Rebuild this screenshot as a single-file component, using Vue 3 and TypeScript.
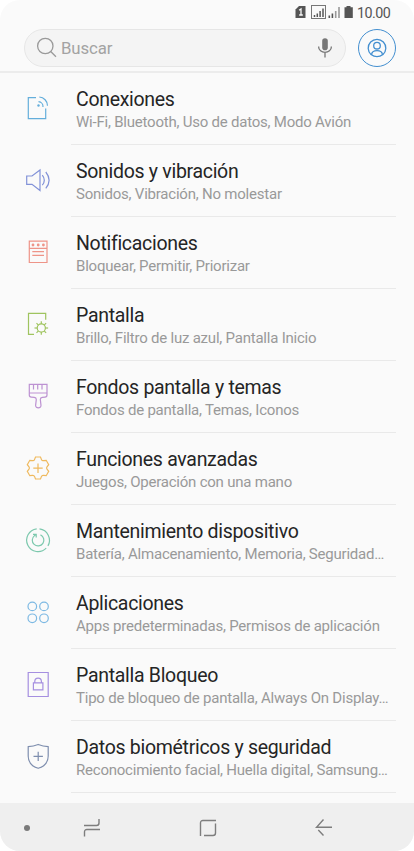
<script setup lang="ts">
interface Setting {
  icon: string
  title: string
  detail: string
}

const settings: Setting[] = [
  { icon: 'connections', title: 'Conexiones', detail: 'Wi-Fi, Bluetooth, Uso de datos, Modo Avión' },
  { icon: 'sound', title: 'Sonidos y vibración', detail: 'Sonidos, Vibración, No molestar' },
  { icon: 'notifications', title: 'Notificaciones', detail: 'Bloquear, Permitir, Priorizar' },
  { icon: 'display', title: 'Pantalla', detail: 'Brillo, Filtro de luz azul, Pantalla Inicio' },
  { icon: 'themes', title: 'Fondos pantalla y temas', detail: 'Fondos de pantalla, Temas, Iconos' },
  { icon: 'advanced', title: 'Funciones avanzadas', detail: 'Juegos, Operación con una mano' },
  { icon: 'maintenance', title: 'Mantenimiento dispositivo', detail: 'Batería, Almacenamiento, Memoria, Seguridad…' },
  { icon: 'apps', title: 'Aplicaciones', detail: 'Apps predeterminadas, Permisos de aplicación' },
  { icon: 'lock', title: 'Pantalla Bloqueo', detail: 'Tipo de bloqueo de pantalla, Always On Display…' },
  { icon: 'security', title: 'Datos biométricos y seguridad', detail: 'Reconocimiento facial, Huella digital, Samsung…' },
]
</script>

<template>
  <div class="screen">
    <header class="top">
      <div class="status">
        <svg class="status-icons" width="60" height="16" viewBox="0 0 60 16">
          <path d="M4 2h6.500v12H.5V5.500z" fill="#555" />
          <path d="M4.100 6.300 6 5v6M4.200 11h3.600" fill="none" stroke="#fafafa" stroke-width="1.300" />
          <rect x="16.500" y="1.500" width="14" height="13" fill="none" stroke="#777" />
          <path d="M19.500 13v-2M22.300 13V9.500M25.100 13V7M28 13V4.500" stroke="#555" stroke-width="1.500" />
          <path d="M34.300 14v-2.500M37.400 14v-4.500" stroke="#555" stroke-width="1.600" />
          <path d="M40.700 14V7M44 14V3" stroke="#999" stroke-width="1.600" />
          <path d="M51.500 2h4v1.300h2.300V14h-8.300V3.300h2z" fill="#555" />
        </svg>
        <span class="clock">10.00</span>
      </div>
      <div class="search-row">
        <div class="search">
          <svg width="22" height="22" viewBox="0 0 22 22" fill="none" stroke="#9a9a9a" stroke-width="1.300">
            <circle cx="9.300" cy="9" r="7.700" />
            <path d="m14.700 14.500 5.300 5.200" />
          </svg>
          <span class="placeholder">Buscar</span>
          <svg width="16" height="22" viewBox="0 0 16 22" fill="none" stroke="#777" stroke-width="1.300">
            <rect x="5.200" y="1.200" width="5.600" height="12" rx="2.800" fill="#777" stroke="none" />
            <path d="M1.700 9.500v.8a6.300 5 0 0 0 12.600 0v-.8M8 15.300v5.200" />
          </svg>
        </div>
        <div class="account">
          <svg width="20" height="20" viewBox="0 0 20 20" fill="none" stroke="#438fd0" stroke-width="1.300">
            <path d="M4.200 16.700A8.800 8.800 0 1 1 15.800 16.700" />
            <circle cx="10" cy="7.700" r="3.300" />
            <path d="M4.500 16.700c.3-2.600 2.500-4 5.500-4s5.200 1.400 5.500 4c-3 2.500-8 2.500-11 0z" />
          </svg>
        </div>
      </div>
    </header>

    <main class="list">
      <div v-for="item in settings" :key="item.icon" class="row">
        <svg class="icon" :class="item.icon" width="30" height="30" viewBox="0 0 30 30">
          <template v-if="item.icon === 'connections'">
            <path d="M13 4.700H5.300v21h17.400V15.500M15.500 8.700A5 5 0 0 1 20 14M16.300 4A8.700 8.700 0 0 1 24.500 12.700" />
            <circle cx="15.500" cy="12.500" r="1.200" class="solid" />
          </template>
          <path
            v-else-if="item.icon === 'sound'"
            d="M3.700 11H9l8-6v20.500l-8-6.200H3.700zM19.300 10.200q4 5 0 10M22.800 7q6.600 8.200 0 16.300"
          />
          <template v-else-if="item.icon === 'notifications'">
            <path d="M6.300 4.200H24v21.300H6.300zM6.300 11.400H24M9.300 14.700H21M9.300 18.300H21" />
            <circle v-for="x in [10, 15.2, 20.4]" :key="x" :cx="x" cy="8" r="1.400" class="solid" />
          </template>
          <template v-else-if="item.icon === 'display'">
            <path d="M11 25.300H5.500v-21h17.200v6.400" />
            <circle cx="18.300" cy="19" r="4.100" />
            <path
              v-for="a in [0, 45, 90, 135, 180, 225, 270, 315]"
              :key="a"
              d="M18.300 14.900v-2.700"
              :transform="`rotate(${a} 18.300 19)`"
            />
          </template>
          <path
            v-else-if="item.icon === 'themes'"
            d="M6.300 3.400H24V14q0 2-2 2.100l-2.700.3q-2 .3-2 2l.7 6c.2 3.300-5.600 3.300-5.400 0l.7-6q0-1.700-2-2L8.300 16.100Q6.300 16 6.300 14zM6.300 12H24M10.500 3.400v5M14.700 3.400v5M19 3.400v5"
          />
          <path
            v-else-if="item.icon === 'advanced'"
            d="M12.500 4h5l1 2.600q.5 1.300 1.900 1.100l2.800-.4 2.500 4.300-1.700 2.200q-.9 1.200 0 2.400l1.700 2.200-2.500 4.300-2.800-.4q-1.400-.2-1.900 1.100l-1 2.600h-5l-1-2.600q-.5-1.300-1.900-1.100l-2.800.4-2.500-4.300L6 16.200q.9-1.200 0-2.400l-1.700-2.200 2.500-4.300 2.800.4q1.400.2 1.900-1.100zM15 10.500v9.500M10.300 15.200h9.400"
          />
          <path
            v-else-if="item.icon === 'maintenance'"
            d="M16.500 3.900A11.400 11.400 0 0 1 24.900 20.900M23.200 23.200A11.400 11.400 0 1 1 13.700 3.900M17.500 9.900A5.800 5.800 0 1 1 11.500 10.600L13 9.600M10 9.300h3.200V12.600"
          />
          <g v-else-if="item.icon === 'apps'">
            <circle cx="9.300" cy="9.400" r="4.300" />
            <circle cx="21" cy="9.400" r="4.300" />
            <circle cx="9.300" cy="21.300" r="4.300" />
            <circle cx="21" cy="21.300" r="4.300" />
          </g>
          <path
            v-else-if="item.icon === 'lock'"
            d="M5.200 3.500h20v24h-20zM10.400 13.800h9.500v7h-9.500zM11.800 13.800v-1.400a3.300 3.300 0 0 1 6.600 0v1.400"
          />
          <path
            v-else
            d="M15.200 3.500Q20 5.300 25.200 5.700V15q0 9.300-10 12.300Q5.200 24.300 5.200 15V5.700Q10.400 5.300 15.200 3.500zM15.200 10.700v9.400M10.500 15.400h9.400"
          />
        </svg>
        <div class="text">
          <div class="title">{{ item.title }}</div>
          <div class="detail">{{ item.detail }}</div>
        </div>
      </div>
    </main>

    <nav class="nav">
      <span class="dot"></span>
      <svg width="18" height="20" viewBox="0 0 18 20">
        <path d="M1 7.500h12.500q2.500 0 2.500-2.500V1M17 11.500H4Q1.500 11.500 1.500 14v4.500" />
      </svg>
      <svg width="18" height="18" viewBox="0 0 18 18">
        <path d="M1.500 17V4q0-2.500 2.500-2.500h13M16.500 4.500V14q0 2.500-2.500 2.500H5" />
      </svg>
      <svg width="18" height="20" viewBox="0 0 18 20">
        <path d="M8.500 1.500 1.500 9.300H17M3.300 12 8.500 17.500" />
      </svg>
    </nav>
  </div>
</template>

<style>
body {
  background: #fff;
}
</style>

<style scoped>
.screen {
  width: 414px;
  height: 851px;
  box-sizing: border-box;
  display: flex;
  flex-direction: column;
  overflow: hidden;
  border-radius: 20px;
  background: #fafafa;
  font-family: Roboto, sans-serif;
}
svg {
  display: block;
  flex: none;
}
.top {
  box-sizing: border-box;
  height: 73px;
  flex: none;
  border-bottom: 2px solid #ececec;
}
.status {
  height: 24px;
  padding: 1px 24px 0 0;
  box-sizing: border-box;
  display: flex;
  align-items: center;
  justify-content: flex-end;
  gap: 2px;
}
.status-icons {
  margin-top: -1px;
}
.clock {
  width: 33px;
  font-size: 14.3px;
  letter-spacing: -0.5px;
  line-height: 20px;
  color: #555;
}
.search-row {
  display: flex;
  align-items: center;
  gap: 12px;
  padding: 5px 0 0 24px;
}
.search {
  box-sizing: border-box;
  width: 322px;
  height: 38px;
  display: flex;
  align-items: center;
  padding: 0 12px 0 11px;
  border: 1px solid #e6e6e6;
  border-radius: 19px;
  background: #f4f4f4;
}
.placeholder {
  flex: 1;
  margin-left: 3px;
  font-size: 16.8px;
  letter-spacing: -0.1px;
  color: #a3a3a3;
}
.account {
  box-sizing: border-box;
  width: 38px;
  height: 38px;
  display: flex;
  align-items: center;
  justify-content: center;
  border: 1px solid #438fd0;
  border-radius: 50%;
}
.list {
  height: 730px;
  flex: none;
  overflow: hidden;
}
.row {
  height: 72px;
  display: flex;
}
.icon {
  margin: 20px 18px 0 23px;
  fill: none;
  stroke: currentColor;
  stroke-width: 1.2;
}
.solid {
  fill: currentColor;
  stroke: none;
}
.text {
  box-sizing: border-box;
  width: 325px;
  padding: 14px 0 0 5px;
  border-bottom: 1px solid #e9e9e9;
  white-space: nowrap;
}
.title {
  font-size: 19.5px;
  letter-spacing: -0.3px;
  line-height: 26px;
  color: #252525;
}
.detail {
  margin-top: -1px;
  font-size: 15px;
  letter-spacing: -0.22px;
  line-height: 20px;
  color: #999;
}
.connections { color: #64aedb; }
.sound { color: #8292d8; }
.notifications { color: #ee9488; }
.display { color: #9fc45f; }
.themes { color: #bd92d2; }
.advanced { color: #efb95d; }
.maintenance { color: #7cc8ad; }
.apps { color: #7db9e3; }
.lock { color: #a58fe0; }
.security { color: #7e8eae; }
.nav {
  flex: 1;
  display: grid;
  grid-template-columns: 54px 76px 156px 76px;
  align-items: center;
  justify-items: center;
  padding-top: 1px;
  background: #efefef;
}
.nav svg {
  fill: none;
  stroke: #7d7d7d;
  stroke-width: 1.4;
}
.dot {
  width: 6px;
  height: 6px;
  border-radius: 50%;
  background: #7a7a7a;
}
</style>
